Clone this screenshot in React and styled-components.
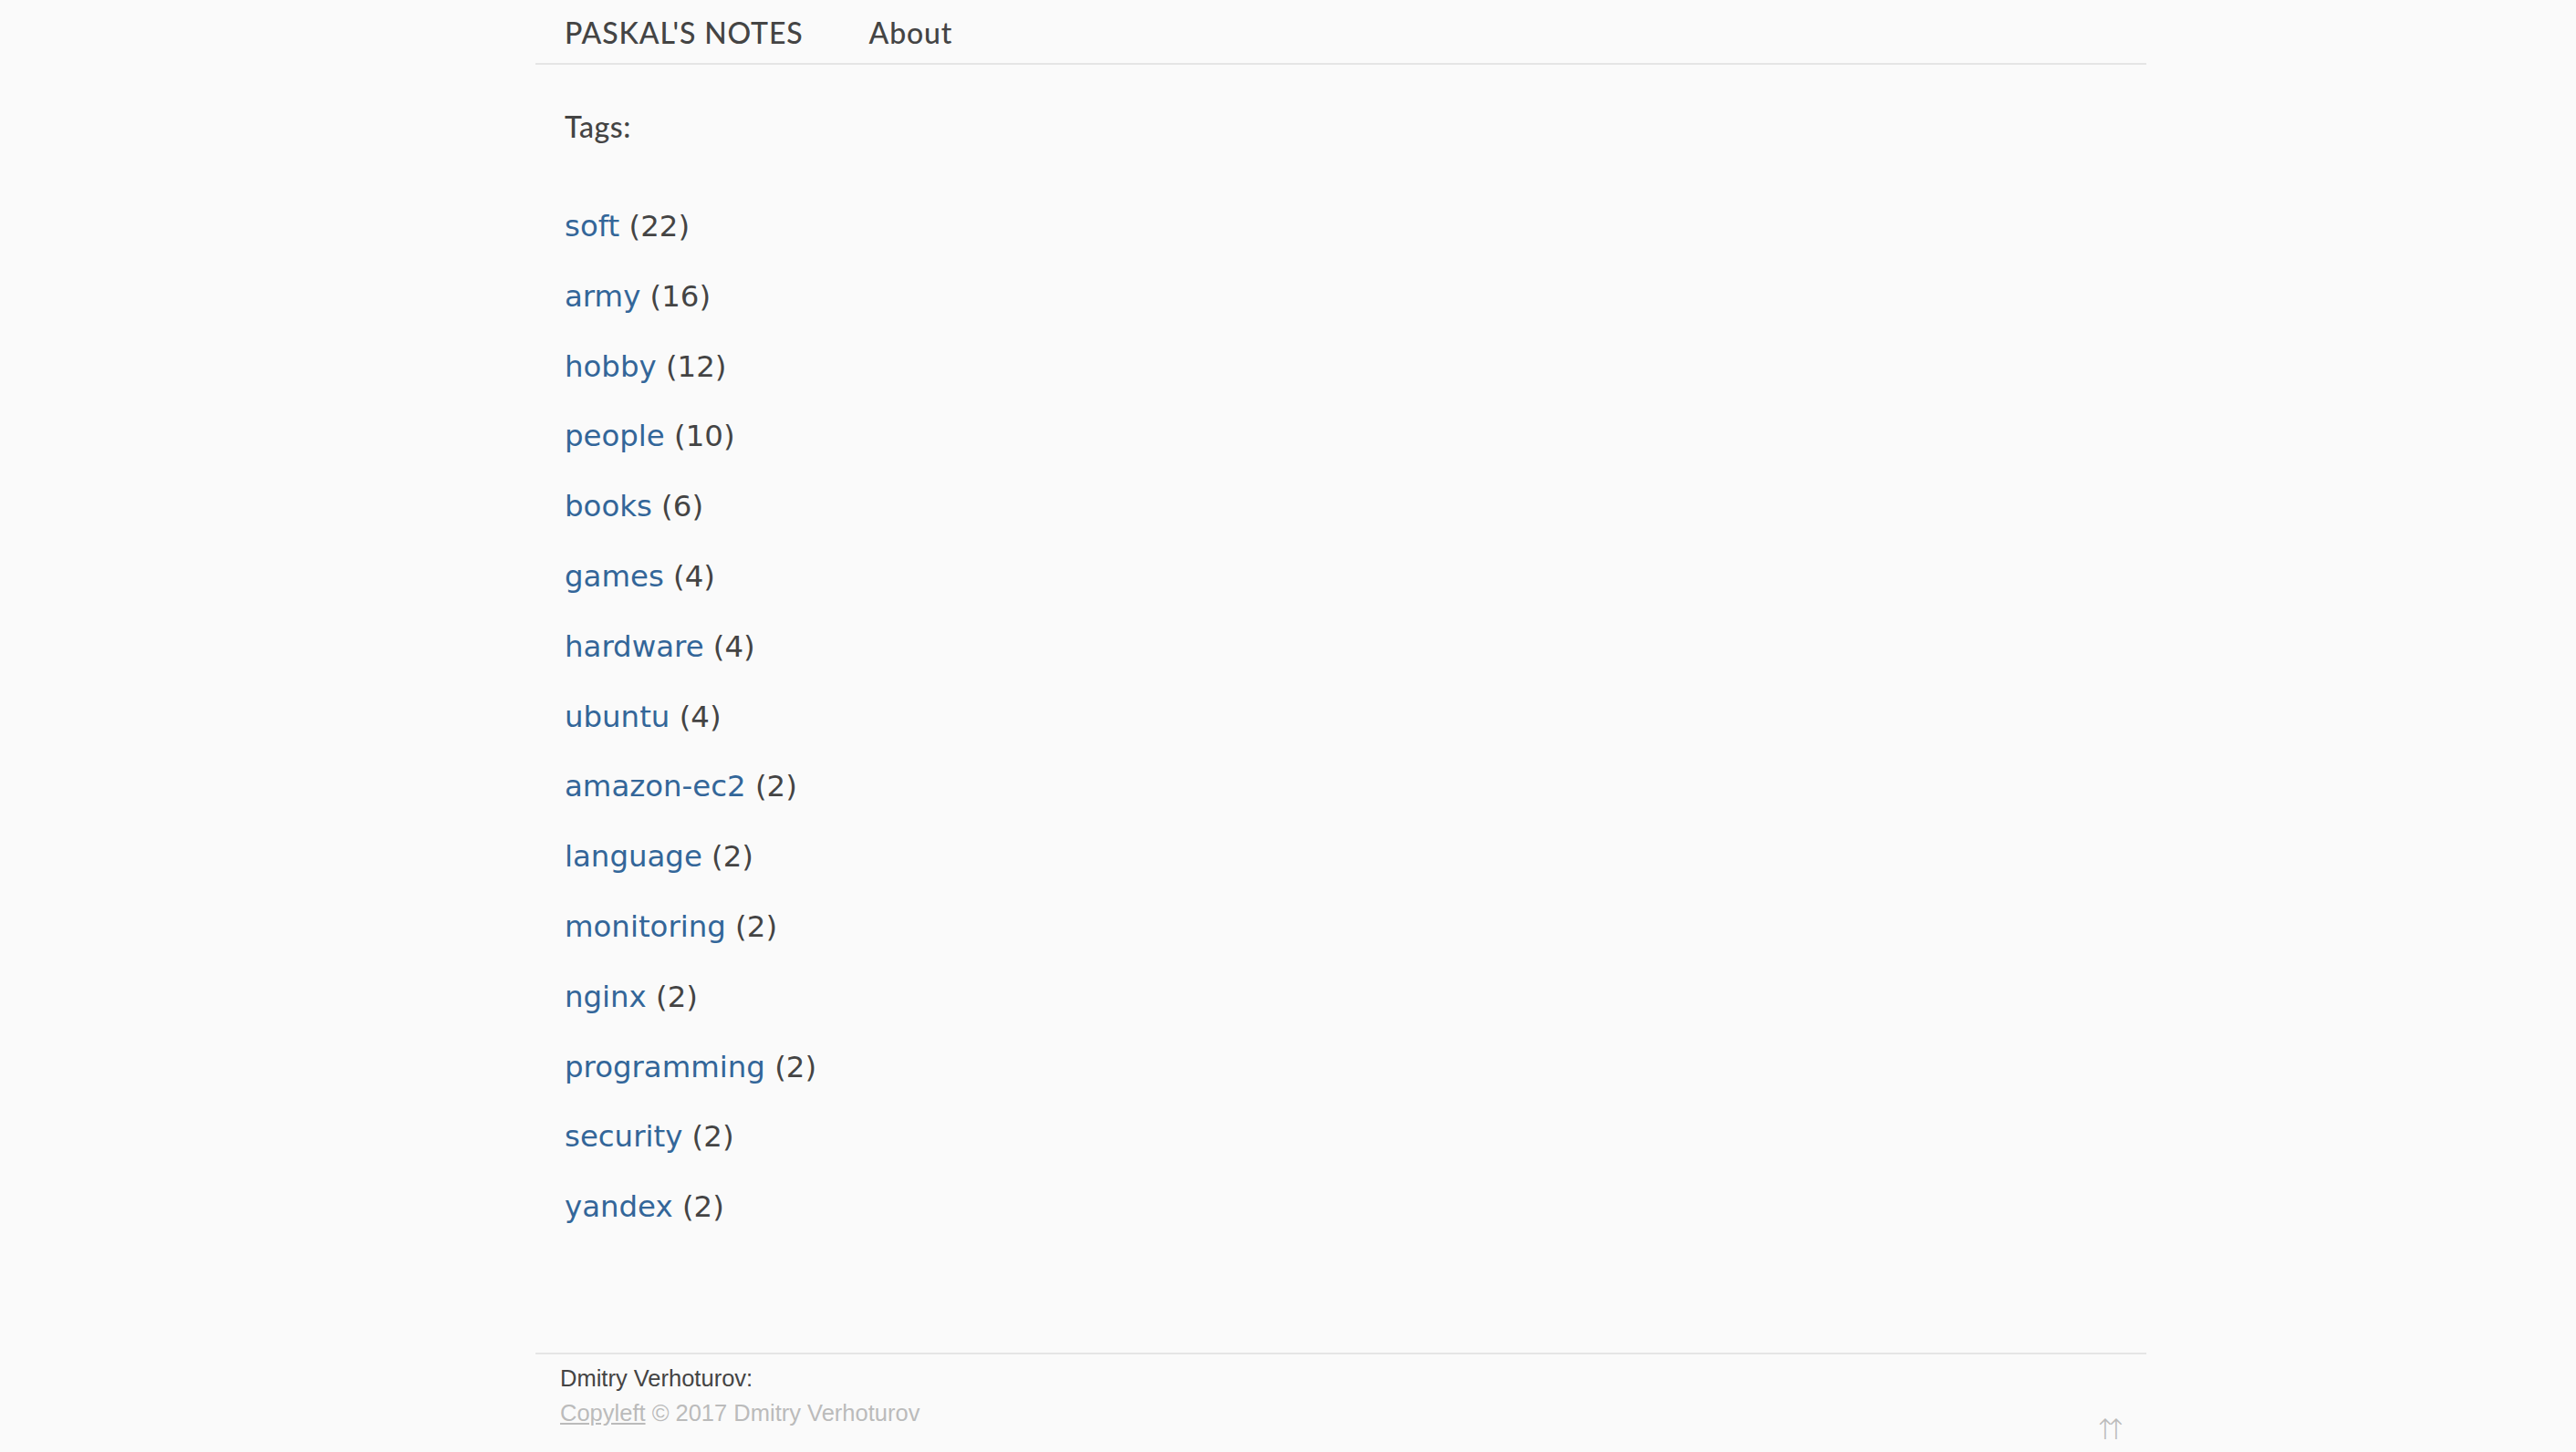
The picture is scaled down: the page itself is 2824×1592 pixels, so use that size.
import React from 'react';
import styled, { createGlobalStyle } from 'styled-components';

const GlobalStyle = createGlobalStyle`
  html, body {
    margin: 0;
    padding: 0;
    background: #fafafa;
  }
  body {
    min-height: 1592px;
    color: #444;
  }
`;

const Page = styled.div`
  width: 1766px;
  margin-left: 587px;
  min-height: 1592px;
  display: flex;
  flex-direction: column;
`;

const Header = styled.header`
  display: flex;
  align-items: flex-start;
  gap: 72px;
  height: 71px;
  padding: 17px 32px 0;
  box-sizing: border-box;
  border-bottom: 2px solid #e5e5e5;
`;

const NavLink = styled.a`
  font-family: Lato, "Open Sans", sans-serif;
  font-size: 32px;
  font-weight: 500;
  letter-spacing: 0.85px;
  color: #444;
  text-decoration: none;
  line-height: 38px;
`;

const Main = styled.main`
  padding: 0 32px;
`;

const Title = styled.h1`
  margin: 49px 0 0;
  font-family: Lato, "Open Sans", sans-serif;
  font-size: 32px;
  font-weight: 500;
  letter-spacing: 0.6px;
  line-height: 38px;
  color: #444;
`;

const TagList = styled.ul`
  list-style: none;
  margin: 52px 0 0;
  padding: 0;
`;

const TagRow = styled.li`
  font-family: "DejaVu Sans", Verdana, sans-serif;
  font-size: 32.4px;
  line-height: 76.8px;
  color: #444;
`;

const TagLink = styled.a`
  color: #336699;
  text-decoration: none;
`;

const Footer = styled.footer`
  margin-top: 121px;
  border-top: 2px solid #e5e5e5;
  display: flex;
  justify-content: space-between;
  padding: 7px 34px 14px 27px;
  font-family: "Liberation Sans", Arial, sans-serif;
  font-size: 25.5px;
  line-height: 38px;
`;

const Credits = styled.div`
  display: flex;
  flex-direction: column;
`;

const Author = styled.span`
  color: #444;
`;

const Copy = styled.span`
  color: #bbb;

  a {
    color: #bbb;
    text-decoration: underline;
  }
`;

const ToTop = styled.a`
  align-self: flex-end;
  margin-bottom: -15px;
  font-family: "DejaVu Sans", sans-serif;
  font-size: 31px;
  font-weight: 300;
  line-height: 32px;
  letter-spacing: -14px;
  color: #bbb;
  text-decoration: none;
`;

const tags = [
  ['soft', 22],
  ['army', 16],
  ['hobby', 12],
  ['people', 10],
  ['books', 6],
  ['games', 4],
  ['hardware', 4],
  ['ubuntu', 4],
  ['amazon-ec2', 2],
  ['language', 2],
  ['monitoring', 2],
  ['nginx', 2],
  ['programming', 2],
  ['security', 2],
  ['yandex', 2],
];

const App = () => {
  return (
    <>
      <GlobalStyle />
      <Page>
        <Header>
          <NavLink href="#">PASKAL'S NOTES</NavLink>
          <NavLink href="#">About</NavLink>
        </Header>
        <Main>
          <Title>Tags:</Title>
          <TagList>
            {tags.map(([name, count]) => (
              <TagRow key={name}>
                <TagLink href="#">{name}</TagLink> ({count})
              </TagRow>
            ))}
          </TagList>
        </Main>
        <Footer>
          <Credits>
            <Author>Dmitry Verhoturov:</Author>
            <Copy>
              <a href="#">Copyleft</a> © 2017 Dmitry Verhoturov
            </Copy>
          </Credits>
          <ToTop href="#">↑↑</ToTop>
        </Footer>
      </Page>
    </>
  );
};

export default App;
